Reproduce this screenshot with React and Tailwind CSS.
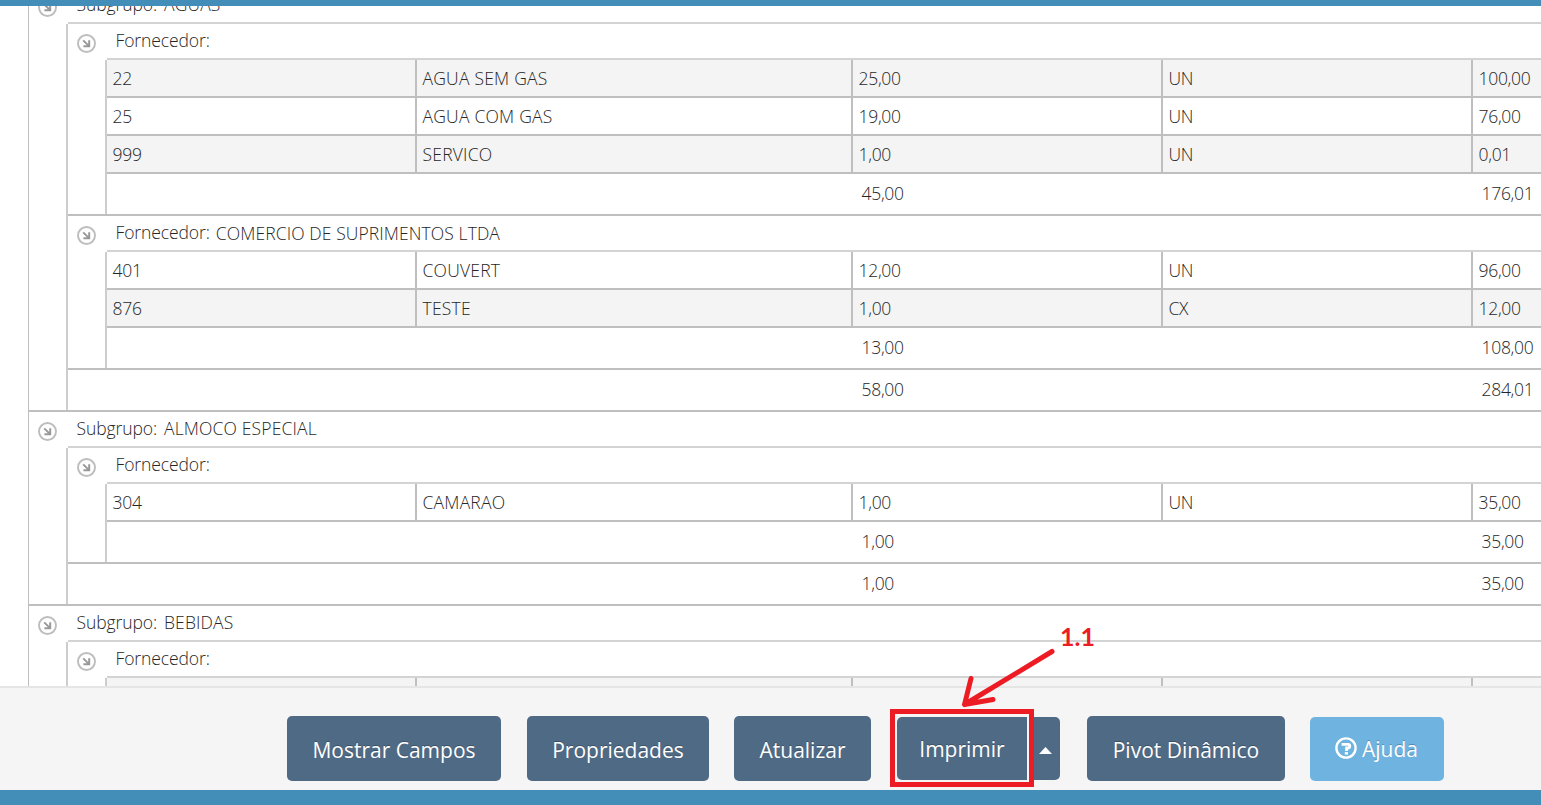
const TEXT = "font-['Open_Sans',sans-serif] font-[350] text-[17.5px] leading-[34px] text-[#262626] whitespace-nowrap [font-kerning:none]";

function Toggle() {
  return (
    <svg className="mt-[10px] ml-[9px] block h-[19px] w-[19px] shrink-0" viewBox="0 0 19 19" fill="none">
      <circle cx="9.5" cy="9.5" r="8.5" stroke="#bdbdbd" strokeWidth="1.9" />
      <path d="M6.2 6.4L11.6 11.6M12.2 6.2V12.2H6.4" stroke="#999" strokeWidth="2" />
    </svg>
  );
}

function Header({ label, value }) {
  return (
    <div className="flex h-[34px]">
      <Toggle />
      <div className={`${TEXT} -mt-px ml-[19.5px] flex`}>
        <span className="tracking-[-0.1px]">{label}</span>
        {value && <span className={label === "Subgrupo:" ? "ml-[7px] tracking-[0.15px]" : "ml-[6px] pt-px tracking-[0.1px]"}>{value}</span>}
      </div>
    </div>
  );
}

function Branch({ children }) {
  return (
    <div>
      <div className="ml-[39px] h-[2px] bg-[#d3d3d3]" />
      <div className="ml-[37px] border-l-2 border-[#cdcdcd]">{children}</div>
    </div>
  );
}

function Row({ cells, shaded }) {
  return (
    <div
      className={`${TEXT} grid h-[38px] grid-cols-[310px_436px_310px_310px_120px] border-b-2 border-[#bfbfbf] ${shaded ? "bg-[#f4f4f4]" : "bg-white"}`}
    >
      {cells.map((c, i) => (
        <div
          key={i}
          className={`pt-px pl-[5.5px] ${i < 4 ? "border-r-2 border-[#bfbfbf]" : ""} ${i === 1 ? "tracking-[0.22px]" : "tracking-[-0.3px]"}`}
        >
          {c}
        </div>
      ))}
    </div>
  );
}

function Total({ quantity, amount, nested }) {
  return (
    <div className={`${TEXT} flex h-[40px] pt-[2px] tracking-[-0.3px] ${nested ? "pl-[754.5px]" : "pl-[793.5px]"}`}>
      <span className="w-[620px] shrink-0">{quantity}</span>
      <span>{amount}</span>
    </div>
  );
}

function Supplier({ name, rows, firstShaded, quantity, amount }) {
  return (
    <div className="border-b-2 border-[#bfbfbf]">
      <Header label="Fornecedor:" value={name} />
      <Branch>
        {rows.map((r, i) => (
          <Row key={i} cells={r} shaded={i % 2 === (firstShaded ? 0 : 1)} />
        ))}
        {quantity && <Total quantity={quantity} amount={amount} nested />}
      </Branch>
    </div>
  );
}

function Subgroup({ name, quantity, amount, children }) {
  return (
    <div className="border-b-2 border-[#bfbfbf]">
      <Header label="Subgrupo:" value={name} />
      <Branch>
        {children}
        {quantity && <Total quantity={quantity} amount={amount} />}
      </Branch>
    </div>
  );
}

function Button({ children, className }) {
  return (
    <button
      className={`flex shrink-0 items-center justify-center whitespace-nowrap font-['Open_Sans',sans-serif] text-[21px] text-white [text-shadow:0_-1px_0_rgba(0,0,0,0.25)] ${className}`}
    >
      {children}
    </button>
  );
}

export default function App() {
  return (
    <div className="relative flex h-[805px] w-[1541px] flex-col overflow-hidden bg-white">
      <div className="h-[6px] shrink-0 bg-[#438eb9]" />
      <div className="h-[680px] shrink-0 overflow-hidden">
        <div className="-mt-[18px] ml-[28px] w-[1530px] border-l border-[#bfbfbf]">
          <Subgroup name="AGUAS" quantity="58,00" amount="284,01">
            <Supplier
              firstShaded
              quantity="45,00"
              amount="176,01"
              rows={[
                ["22", "AGUA SEM GAS", "25,00", "UN", "100,00"],
                ["25", "AGUA COM GAS", "19,00", "UN", "76,00"],
                ["999", "SERVICO", "1,00", "UN", "0,01"],
              ]}
            />
            <Supplier
              name="COMERCIO DE SUPRIMENTOS LTDA"
              quantity="13,00"
              amount="108,00"
              rows={[
                ["401", "COUVERT", "12,00", "UN", "96,00"],
                ["876", "TESTE", "1,00", "CX", "12,00"],
              ]}
            />
          </Subgroup>
          <Subgroup name="ALMOCO ESPECIAL" quantity="1,00" amount="35,00">
            <Supplier quantity="1,00" amount="35,00" rows={[["304", "CAMARAO", "1,00", "UN", "35,00"]]} />
          </Subgroup>
          <Subgroup name="BEBIDAS">
            <Supplier firstShaded rows={[["", "", "", "", ""]]} />
          </Subgroup>
        </div>
      </div>
      <div className="flex h-[104px] shrink-0 items-start border-t-2 border-[#e5e5e5] bg-[#f5f5f5] pt-[28px] pl-[287px]">
        <Button className="h-[65px] w-[214px] rounded-[5px] bg-[#4f6a85] pt-[5px]">Mostrar Campos</Button>
        <Button className="ml-[26px] h-[65px] w-[182px] rounded-[5px] bg-[#4f6a85] pt-[5px]">Propriedades</Button>
        <Button className="ml-[25px] h-[65px] w-[137px] rounded-[5px] bg-[#4f6a85] pt-[5px]">Atualizar</Button>
        <Button className="mt-px ml-[26px] h-[63px] w-[130px] rounded-l-[5px] bg-[#4f6a85] pt-[2px]">Imprimir</Button>
        <Button className="mt-px ml-[2px] h-[63px] w-[31px] rounded-r-[5px] bg-[#4f6a85] pt-[4px] pl-[2px]">
          <svg className="h-[7px] w-[13px]" viewBox="0 0 13 7">
            <path d="M0 7L6.5 0L13 7Z" fill="#fff" />
          </svg>
        </Button>
        <Button className="ml-[27px] h-[65px] w-[198px] rounded-[5px] bg-[#4f6a85] pt-[5px]">Pivot Dinâmico</Button>
        <Button className="mt-px ml-[25px] h-[64px] w-[134px] rounded-[5px] bg-[#6fb3e0] pt-px pr-px">
          <svg className="mr-[5px] mb-[4px] h-[22px] w-[22px]" viewBox="0 0 22 22" fill="none">
            <circle cx="11" cy="11" r="9.6" stroke="#fff" strokeWidth="2.4" />
            <path d="M6.6 7.3H13.2Q14.7 7.3 14.7 8.6V9.6Q14.7 11 12.8 11H11.6V14" stroke="#fff" strokeWidth="2.8" />
            <path d="M9.8 15.1H13V17.6H9.8Z" fill="#fff" />
          </svg>
          Ajuda
        </Button>
      </div>
      <div className="h-[15px] shrink-0 bg-[#438eb9]" />
      <div className="absolute top-[709px] left-[890px] h-[78px] w-[144px] border-5 border-[#ed1c24]" />
      <svg className="absolute top-[640px] left-[950px] h-[76px] w-[110px]" viewBox="950 640 110 76" fill="none">
        <path d="M1052 651.5L964.5 704.5M971 678.5L964.5 704.5L993 699.5" stroke="#ed1c24" strokeWidth="5" strokeLinecap="round" strokeLinejoin="round" />
      </svg>
      <div className="absolute top-[619px] left-[1060px] font-['Lato',sans-serif] text-[25px] leading-[34px] font-bold text-[#ed1c24]">1.1</div>
    </div>
  );
}
